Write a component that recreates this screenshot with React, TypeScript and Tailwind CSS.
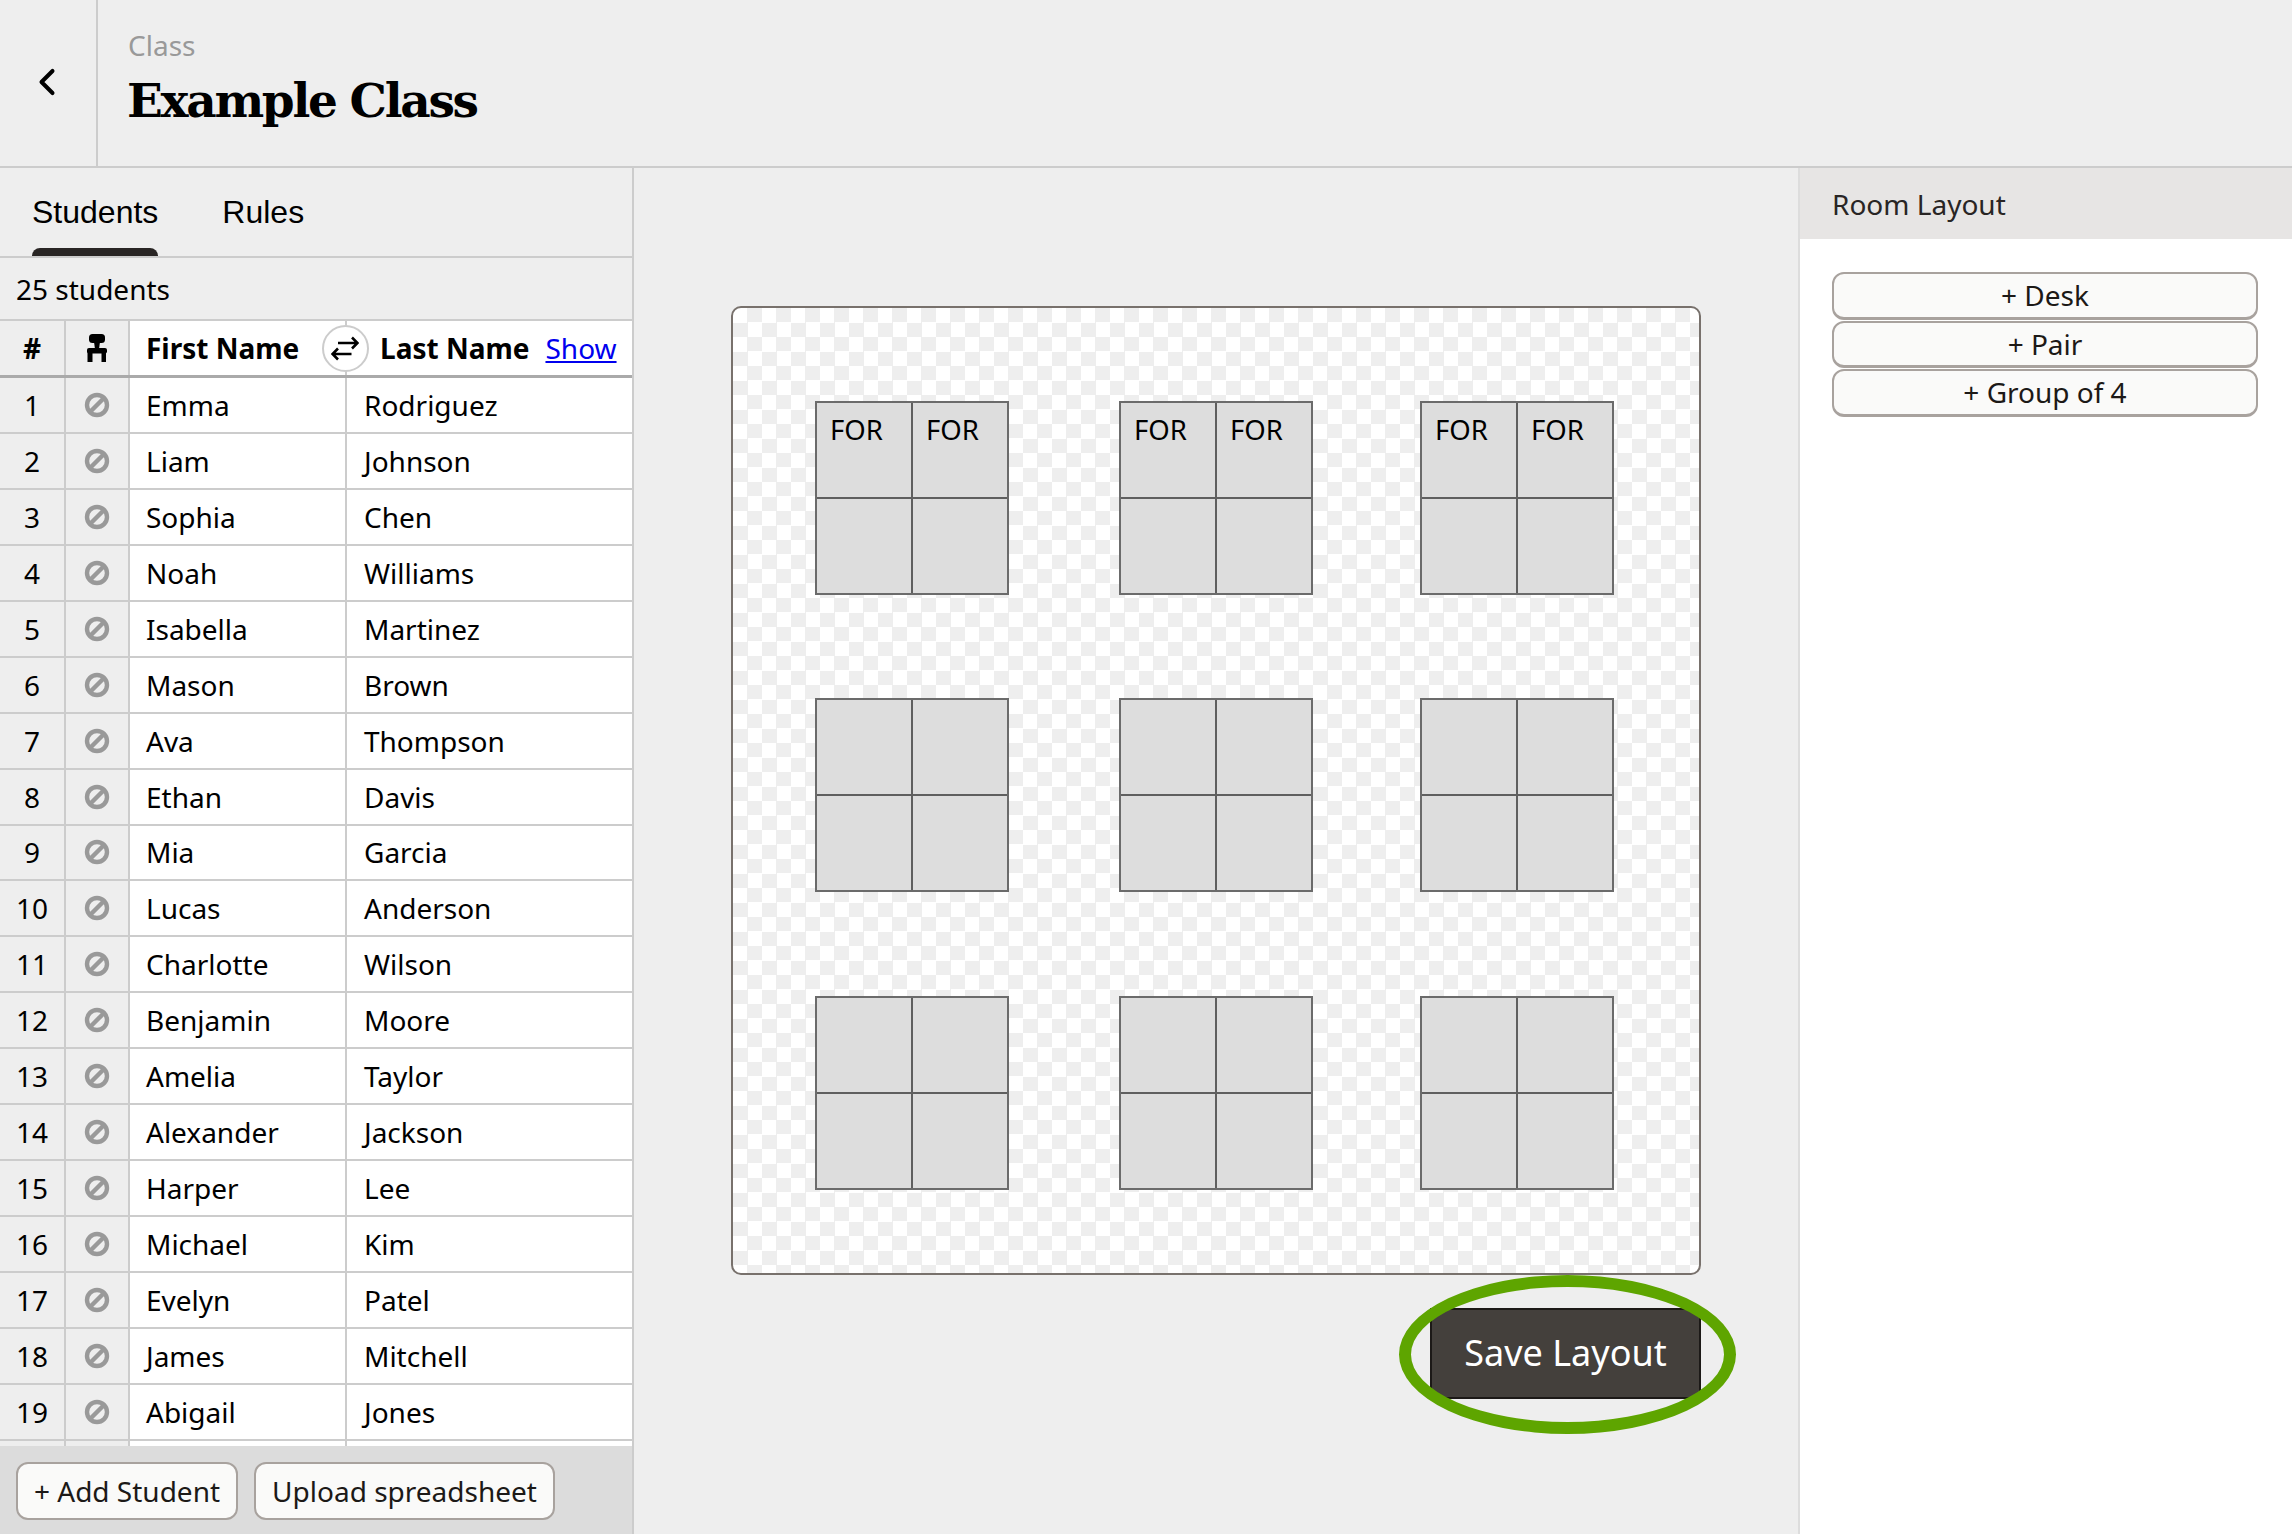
import { ChevronLeft } from "lucide-react";

const students = [
  ["Emma", "Rodriguez"],
  ["Liam", "Johnson"],
  ["Sophia", "Chen"],
  ["Noah", "Williams"],
  ["Isabella", "Martinez"],
  ["Mason", "Brown"],
  ["Ava", "Thompson"],
  ["Ethan", "Davis"],
  ["Mia", "Garcia"],
  ["Lucas", "Anderson"],
  ["Charlotte", "Wilson"],
  ["Benjamin", "Moore"],
  ["Amelia", "Taylor"],
  ["Alexander", "Jackson"],
  ["Harper", "Lee"],
  ["Michael", "Kim"],
  ["Evelyn", "Patel"],
  ["James", "Mitchell"],
  ["Abigail", "Jones"],
];

// desks sit on a free canvas, so their place is the content
const desks = [
  { pos: "left-[82px] top-[93px]", labels: true },
  { pos: "left-[386px] top-[93px]", labels: true },
  { pos: "left-[687px] top-[93px]", labels: true },
  { pos: "left-[82px] top-[390px]", labels: false },
  { pos: "left-[386px] top-[390px]", labels: false },
  { pos: "left-[687px] top-[390px]", labels: false },
  { pos: "left-[82px] top-[688px]", labels: false },
  { pos: "left-[386px] top-[688px]", labels: false },
  { pos: "left-[687px] top-[688px]", labels: false },
];

function BanIcon() {
  return (
    <svg width="26" height="26" viewBox="0 0 26 26" fill="none" stroke="#999999" strokeWidth="4.4">
      <circle cx="13" cy="13" r="10" />
      <line x1="6.5" y1="19.5" x2="19.5" y2="6.5" />
    </svg>
  );
}

function ChairIcon() {
  return (
    <svg width="20" height="28" viewBox="0 0 20 28" fill="#000000">
      <rect x="2" y="0" width="16" height="9" rx="3.5" />
      <path d="M7 8h6l-1 7H8z" />
      <rect x="0" y="14" width="20" height="5.5" rx="2" />
      <rect x="0.5" y="17" width="5" height="11" />
      <rect x="14.5" y="17" width="4.5" height="11" />
    </svg>
  );
}

function SwapIcon() {
  return (
    <svg width="28" height="25" viewBox="0 0 28 25" fill="none" stroke="#000000" strokeWidth="2.6" className="mr-[2px]">
      <path d="M7 7h19.5M21 1.5L26.5 7 21 12.5" />
      <path d="M20.5 18H1.5M7 12.5L1.5 18 7 23.5" />
    </svg>
  );
}

function Desk({ pos, labels }: { pos: string; labels: boolean }) {
  const cell = "border-[#5f5f5f] bg-[#dddddd] pl-[13px] pt-[8px] text-[27.5px] leading-[38px] text-black";
  return (
    <div className={`absolute ${pos} grid w-[194px] grid-cols-[96px_94px] grid-rows-[96px_94px] border-2 border-[#6b6b6b]`}>
      <div className={`${cell} border-r-2 border-b-2`}>{labels && "FOR"}</div>
      <div className={`${cell} border-b-2`}>{labels && "FOR"}</div>
      <div className={`${cell} border-r-2`} />
      <div className={cell} />
    </div>
  );
}

function RoomButton({ label }: { label: string }) {
  return (
    <button className="h-[47.5px] w-full rounded-[12px] border-2 border-b-[3px] border-[#a8a29e] bg-[#fafaf9] text-[28px] leading-[40px] text-[#1c1917]">
      {label}
    </button>
  );
}

function FooterButton({ label, width }: { label: string; width: string }) {
  return (
    <button className={`h-[58px] ${width} rounded-[12px] border-2 border-[#a8a29e] bg-[#fafaf9] text-[28px] text-[#1c1917]`}>
      {label}
    </button>
  );
}

export default function App() {
  return (
    <div className="flex h-screen w-screen flex-col overflow-hidden bg-[#eeeeee] font-['Noto_Sans',sans-serif] text-black">
      <header className="flex h-[168px] shrink-0 border-b-2 border-[#cccccc]">
        <div className="flex w-[98px] items-center justify-center border-r-2 border-[#cccccc] pr-[3px]">
          <ChevronLeft size={44} strokeWidth={2.2} className="-mt-[2px]" />
        </div>
        <div className="pl-[30px] pt-[26px]">
          <p className="text-[28px] leading-[38px] text-[#999999]">Class</p>
          <h1 className="mt-[7px] -ml-[1px] font-['DejaVu_Serif',serif] text-[47px] font-bold leading-[60px] tracking-[-2.3px]">
            Example Class
          </h1>
        </div>
      </header>

      <div className="flex min-h-0 flex-1">
        <aside className="flex w-[634px] shrink-0 flex-col border-r-2 border-[#cccccc]">
          <nav className="flex h-[90px] shrink-0 gap-[64px] border-b-2 border-[#cccccc] pl-[32px] font-['Liberation_Sans',sans-serif] text-[32px]">
            <div className="relative pt-[24px] leading-[40px]">
              Students
              <span className="absolute bottom-0 left-0 right-0 h-[8px] rounded-t-[8px] bg-[#292524]" />
            </div>
            <div className="pt-[24px] leading-[40px]">Rules</div>
          </nav>

          <div className="flex h-[63px] shrink-0 items-center border-b-2 border-[#cccccc] pl-[16px] text-[28px]">25 students</div>

          <div className="relative flex h-[57px] shrink-0 border-b-[3px] border-[#aaaaaa] text-[28px] font-bold">
            <div className="flex w-[66px] items-center justify-center border-r-2 border-[#cccccc]">#</div>
            <div className="flex w-[64px] items-center justify-center border-r-2 border-[#cccccc]">
              <ChairIcon />
            </div>
            <div className="flex w-[217px] items-center border-r-2 border-[#cccccc] bg-white pl-[16px]">First Name</div>
            <div className="flex flex-1 items-center bg-white pl-[33px]">
              Last Name
              <a className="ml-[16px] font-normal text-[#0000ee] underline">Show</a>
            </div>
            <div className="absolute left-[322px] top-[4px] flex h-[47px] w-[47px] items-center justify-center rounded-full border-2 border-[#cccccc] bg-white">
              <SwapIcon />
            </div>
          </div>

          <div className="min-h-0 flex-1 overflow-hidden">
            {students.map(([first, last], i) => (
              <div key={first} className="flex h-[55.95px] border-b-2 border-[#cccccc] text-[28px] leading-[38px]">
                <div className="flex w-[66px] items-center justify-center border-r-2 border-[#cccccc]">{i + 1}</div>
                <div className="flex w-[64px] items-center justify-center border-r-2 border-[#cccccc]">
                  <BanIcon />
                </div>
                <div className="flex w-[217px] items-center border-r-2 border-[#cccccc] bg-white pl-[16px]">{first}</div>
                <div className="flex flex-1 items-center bg-white pl-[17px]">{last}</div>
              </div>
            ))}
            <div className="flex h-[56px]">
              <div className="w-[66px] border-r-2 border-[#cccccc]" />
              <div className="w-[64px] border-r-2 border-[#cccccc]" />
              <div className="w-[217px] border-r-2 border-[#cccccc] bg-white" />
              <div className="flex-1 bg-white" />
            </div>
          </div>

          <div className="flex h-[88px] shrink-0 items-start gap-[16px] bg-[#dcdcdc] pl-[16px] pt-[16px]">
            <FooterButton label="+ Add Student" width="w-[222px]" />
            <FooterButton label="Upload spreadsheet" width="w-[301px]" />
          </div>
        </aside>

        <main className="flex min-w-0 flex-1 flex-col pl-[97px] pt-[138px]">
          <div className="relative h-[969px] w-[970px] rounded-[10px] border-2 border-[#78716c] bg-[repeating-conic-gradient(#eeeeee_0%_25%,#ffffff_0%_50%)] bg-[length:29px_29px]">
            {desks.map((d) => (
              <Desk key={d.pos} pos={d.pos} labels={d.labels} />
            ))}
          </div>
          <div className="relative ml-[699px] mt-[33px] w-[271px]">
            <button className="h-[91px] w-full border-2 border-[#1c1917] bg-[#44403c] pb-[2px] text-[36px] text-white">Save Layout</button>
            <div className="absolute -left-[31px] -top-[33px] h-[159px] w-[337px] rounded-[50%] border-[12px] border-[#5ea500]" />
          </div>
        </main>

        <aside className="w-[494px] shrink-0 border-l-2 border-[#dddddd] bg-white">
          <div className="flex h-[71px] items-center bg-[#e7e5e4] pl-[32px] text-[28px] text-[#292524]">Room Layout</div>
          <div className="flex flex-col gap-px pl-[32px] pr-[34px] pt-[33px]">
            <RoomButton label="+ Desk" />
            <RoomButton label="+ Pair" />
            <RoomButton label="+ Group of 4" />
          </div>
        </aside>
      </div>
    </div>
  );
}
